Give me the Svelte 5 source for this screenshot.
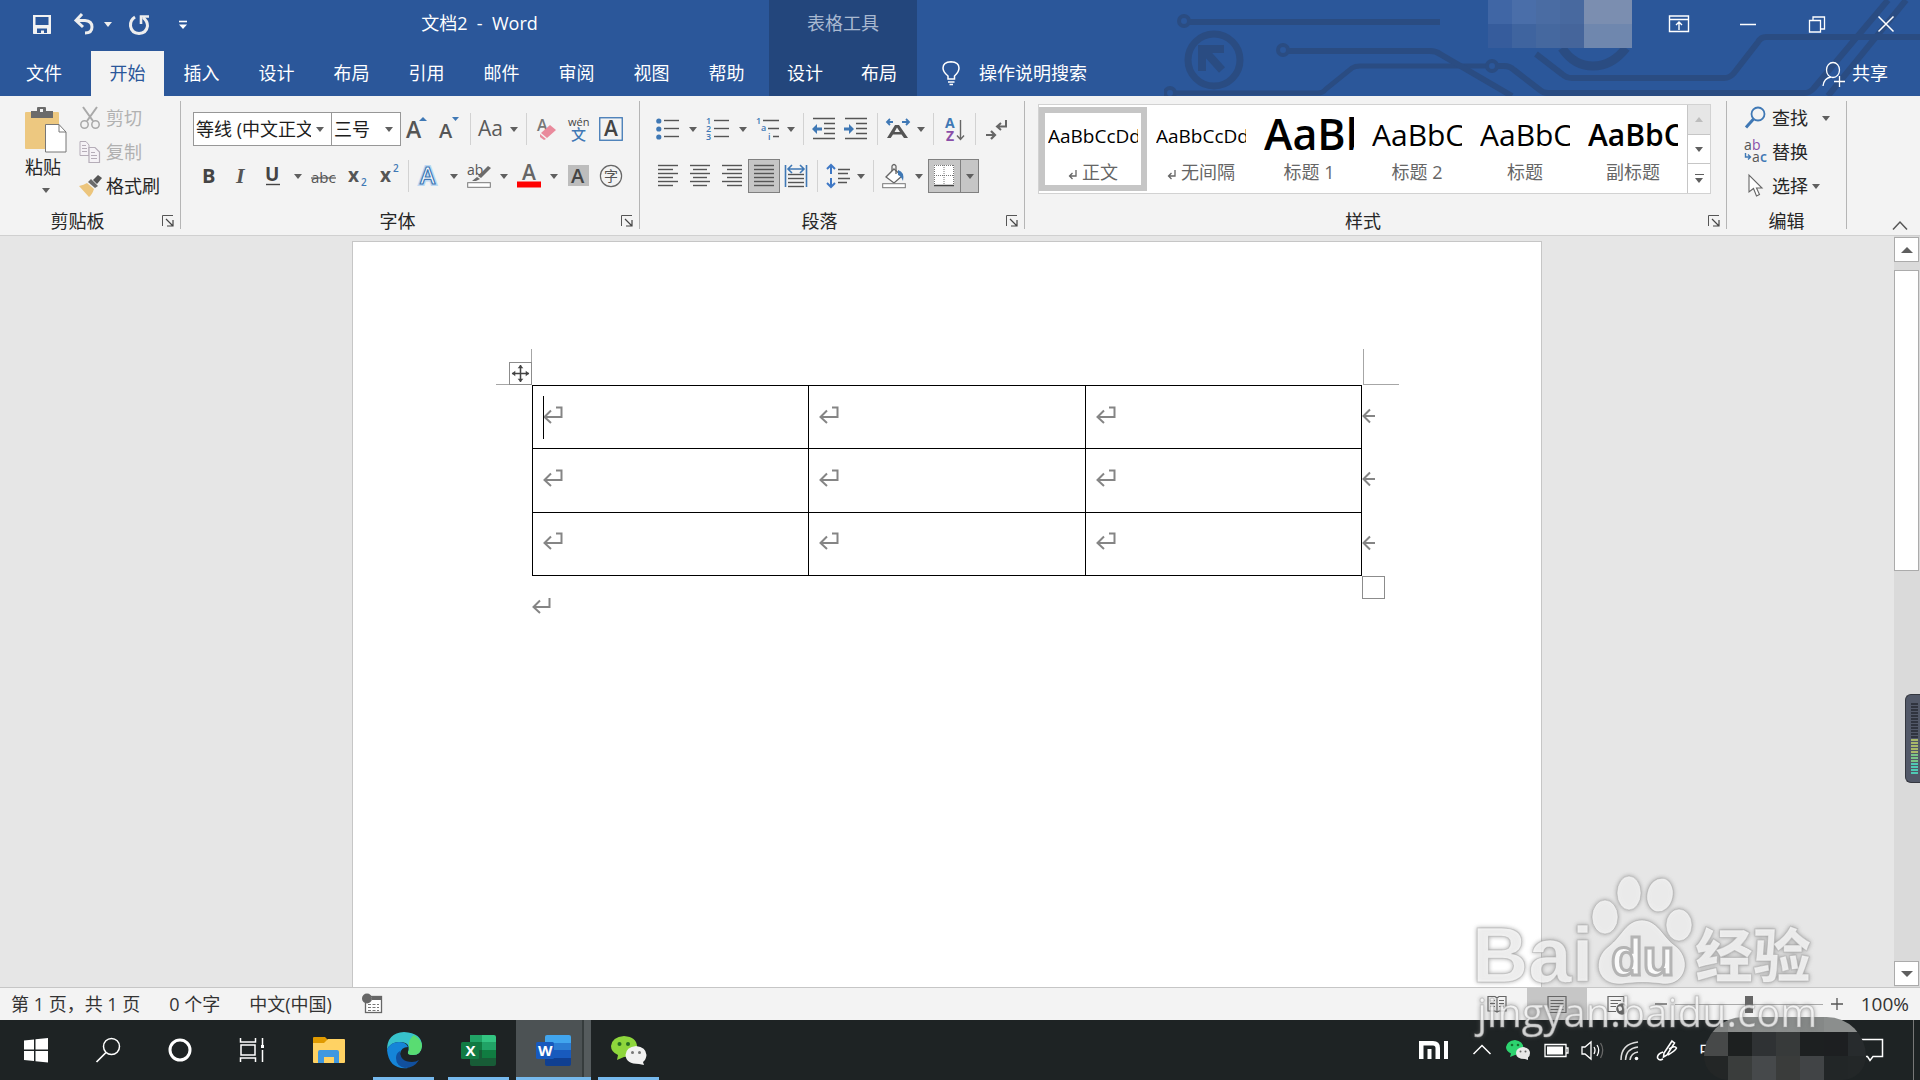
<script lang="ts">
  type Tool = { id: string; label: string; arrow?: boolean; tight?: boolean; pressed?: boolean; sep?: boolean };

  const tabs = ['文件', '开始', '插入', '设计', '布局', '引用', '邮件', '审阅', '视图', '帮助'];
  let activeTab = $state('开始');
  let zoom = $state(50);

  const fontTop: Tool[] = [
    { id: 'grow', label: '增大字号' },
    { id: 'shrink', label: '减小字号' },
    { id: 'case', label: '更改大小写', arrow: true, tight: true, sep: true },
    { id: 'clear', label: '清除所有格式', sep: true },
    { id: 'pinyin', label: '拼音指南' },
    { id: 'charBorder', label: '字符边框' },
  ];
  const fontBottom: Tool[] = [
    { id: 'bold', label: '加粗' },
    { id: 'italic', label: '倾斜' },
    { id: 'underline', label: '下划线', arrow: true },
    { id: 'strike', label: '删除线' },
    { id: 'sub', label: '下标' },
    { id: 'sup', label: '上标' },
    { id: 'effects', label: '文本效果', arrow: true, sep: true },
    { id: 'highlight', label: '突出显示', arrow: true },
    { id: 'fontColor', label: '字体颜色', arrow: true },
    { id: 'shade', label: '字符底纹' },
    { id: 'enclose', label: '带圈字符' },
  ];
  const paraTop: Tool[] = [
    { id: 'bullets', label: '项目符号', arrow: true },
    { id: 'numbers', label: '编号', arrow: true },
    { id: 'levels', label: '多级列表', arrow: true, tight: true },
    { id: 'outdent', label: '减少缩进量', sep: true },
    { id: 'indent', label: '增加缩进量' },
    { id: 'asian', label: '中文版式', arrow: true, tight: true, sep: true },
    { id: 'sort', label: '排序', sep: true },
    { id: 'marks', label: '显示编辑标记', sep: true },
  ];
  const paraBottom: Tool[] = [
    { id: 'left', label: '左对齐' },
    { id: 'center', label: '居中' },
    { id: 'right', label: '右对齐' },
    { id: 'justify', label: '两端对齐', pressed: true },
    { id: 'distribute', label: '分散对齐' },
    { id: 'spacing', label: '行和段落间距', arrow: true, tight: true, sep: true },
    { id: 'bucket', label: '底纹', arrow: true, sep: true },
    { id: 'borders', label: '边框', arrow: true, pressed: true },
  ];

  const styles = [
    { name: '正文', sample: 'AaBbCcDd', kind: 'body', mark: true, active: true },
    { name: '无间隔', sample: 'AaBbCcDd', kind: 'body', mark: true },
    { name: '标题 1', sample: 'AaBb', kind: 'h1' },
    { name: '标题 2', sample: 'AaBbC', kind: 'h2' },
    { name: '标题', sample: 'AaBbC', kind: 'h2' },
    { name: '副标题', sample: 'AaBbC', kind: 'sub' },
  ];

  const pins = [
    { id: 'start', label: '开始' },
    { id: 'find', label: '搜索' },
    { id: 'cortana', label: 'Cortana' },
    { id: 'taskview', label: '任务视图' },
    { id: 'explorer', label: '文件资源管理器', wide: true },
    { id: 'edge', label: 'Microsoft Edge', wide: true, open: true },
    { id: 'excel', label: 'Excel', wide: true, open: true },
    { id: 'word', label: 'Word', wide: true, open: true, current: true },
    { id: 'wechat', label: '微信', wide: true, open: true },
  ];

  const accountTiles = [
    '#4066a5', '#4a6ea9', '#4a6ca3', '#48699f', '#7b8eb0', '#7b8eb0',
    '#365c9c', '#3f649f', '#45689f', '#45659b', '#6f87ae', '#6f87ae',
  ];
  const clockTiles = [
    '#808382', '#8a8c8b', '#8a8d8c', '#8b8e8d', '#858887', '#8b8e8d', '#8b8e8d',
    '#474949', '#1d2020', '#2f3234', '#373a3a', '#1d2021', '#1d1f21', '#272b2d',
    '#232626', '#3a3d3c', '#46494b', '#3a3c3b', '#414446', '#222627', '#232728',
  ];

  const meter = Array.from({ length: 24 }, (_, i) => (i < 12 ? '#30343f' : i < 17 ? '#a9b869' : i < 20 ? '#79c487' : '#4fc9b4'));

  const lines = (rows: [number, number][], step = 5, top = 2) =>
    rows.map(([a, b], i) => `<path d="M${a} ${top + i * step + 0.5}H${b}"/>`).join('');
  const rule = (inner: string) => `<g stroke="#555" stroke-width="1.4" fill="none">${inner}</g>`;
  const T = (x: number, y: number, size: number, text: string, fill = '#555', extra = '') =>
    `<text x="${x}" y="${y}" font-size="${size}" fill="${fill}" ${extra}>${text}</text>`;
  const B = '#3f78b5';

  // every tool icon is drawn on a 24x24 grid
  const icons: Record<string, string> = {
    grow: T(1, 21, 23, 'A', '#555', 'font-weight="600"') + `<path d="M14 4L18 0L22 4Z" fill="${B}"/>`,
    shrink: T(2, 21, 20, 'A', '#555', 'font-weight="600"') + `<path d="M15 0H22L18.500 4Z" fill="${B}"/>`,
    case: T(-1, 19, 21, 'Aa', '#5a5a5a', 'font-weight="500"'),
    clear: T(2, 14, 16, 'A', '#777', 'font-weight="600"') + '<path d="M15 8L21 13L12 21L6 16Z" fill="#e98a9c"/><path d="M5 17L11 22L9 23L5 20Z" fill="#e98a9c"/>',
    pinyin: T(1, 9, 11, 'wén', '#444', 'font-weight="500"') + T(4, 23, 15, '文', B, 'font-weight="500"'),
    charBorder: `<rect x=".75" y=".75" width="22.500" height="22.500" fill="#f3f3f3" stroke="${B}" stroke-width="1.300"/>` + T(5, 19, 21, 'A', '#444', 'font-weight="600"'),
    bold: T(5, 19, 20, 'B', '#444', 'font-weight="700"'),
    italic: '<text x="7" y="19" font-size="22" fill="#555" font-family="Liberation Serif" font-style="italic" font-weight="700">I</text>',
    underline: T(4, 17, 19, 'U', '#444', 'font-weight="700"') + '<path d="M5 20.500H19" stroke="#444" stroke-width="1.400"/>',
    strike: T(0, 19, 15, 'abc', '#555') + '<path d="M0 14H25" stroke="#555" stroke-width="1.200"/>',
    sub: T(5, 18, 19, 'x', '#555', 'font-weight="700"') + T(18, 22, 10, '2', B, 'font-weight="600"'),
    sup: T(5, 18, 19, 'x', '#555', 'font-weight="700"') + T(18, 8, 10, '2', B, 'font-weight="600"'),
    effects: `<text x="3" y="20" font-size="23" font-weight="600" fill="#fff" stroke="#bcd8f2" stroke-width="4">A</text><text x="3" y="20" font-size="23" font-weight="600" fill="#fff" stroke="${B}" stroke-width="1.200">A</text>`,
    highlight: T(0, 11, 14, 'ab', '#555', 'font-weight="500"') + '<path d="M21 2L24 4L14 14L11 12Z" fill="#6b6b6b"/><path d="M10 13L13 15L9 17L5 17Z" fill="#6b6b6b"/><rect x=".7" y="18.700" width="22.600" height="4.600" fill="#fff" stroke="#777"/>',
    fontColor: T(5, 16, 21, 'A', '#666', 'font-weight="600"') + '<rect y="17.500" width="24" height="6" fill="#f00"/>',
    shade: '<rect x="1" y="1" width="21" height="21" fill="#bdbdbd"/>' + T(4, 19, 20, 'A', '#444', 'font-weight="600"'),
    enclose: '<circle cx="12" cy="12" r="10.600" fill="none" stroke="#666" stroke-width="1.200"/>' + T(5, 17, 14, '字', '#555'),
    bullets: [4, 12, 20].map((y) => `<circle cx="2.800" cy="${y}" r="2.600" fill="${B}"/>`).join('') + rule(lines([[8, 23], [8, 23], [8, 23]], 8, 3)),
    numbers: T(0, 7, 9, '1', B, 'font-weight="600"') + T(0, 15, 9, '2', B, 'font-weight="600"') + T(0, 23, 9, '3', B, 'font-weight="600"') + rule(lines([[8, 23], [8, 23], [8, 23]], 8, 3)),
    levels: T(0, 7, 9, '1', B, 'font-weight="600"') + T(5, 14, 9, 'a', B, 'font-weight="600"') + T(12, 23, 9, 'i', B, 'font-weight="600"') + rule('<path d="M7 3.500H23M12 11.500H23M17 19.500H23"/>'),
    outdent: rule('<path d="M1 1.500H23M12 6.500H23M12 11.500H23M12 16.500H23M1 21.500H23"/>') + `<path d="M0 12L5 7V10.500H10V13.500H5V17Z" fill="${B}"/>`,
    indent: rule('<path d="M1 1.500H23M12 6.500H23M12 11.500H23M12 16.500H23M1 21.500H23"/>') + `<path d="M10 12L5 7V10.500H0V13.500H5V17Z" fill="${B}"/>`,
    asian: '<path d="M1 21L9 8H13L22 21H18L15.500 17.500H7L4.700 21ZM8.500 15H14L11 10.500Z" fill="#555"/>' + `<path d="M1 5H7M4 2L1 5L4 8M16 5H23M20 2L23 5L20 8" stroke="${B}" stroke-width="1.800" fill="none"/>`,
    sort: T(3, 11, 14, 'A', B, 'font-weight="700"') + T(4, 24, 14, 'Z', '#8a4fa8', 'font-weight="700"') + '<path d="M18.500 3V22M15 18.500L18.500 22.500L22 18.500" stroke="#666" stroke-width="1.400" fill="none"/>',
    marks: '<path d="M22 3V9.500H13M17 6L13 9.500L17 13" stroke="#666" stroke-width="2" fill="none"/><path d="M2 18H10M7 14L11 18L7 22" stroke="#666" stroke-width="2.200" fill="none"/>',
    left: rule(lines([[2, 22], [2, 17], [2, 22], [2, 17], [2, 22], [2, 17]], 4, 1)),
    center: rule(lines([[2, 22], [5, 19], [2, 22], [5, 19], [2, 22], [5, 19]], 4, 1)),
    right: rule(lines([[2, 22], [7, 22], [2, 22], [7, 22], [2, 22], [7, 22]], 4, 1)),
    justify: rule(lines([[2, 22], [2, 22], [2, 22], [2, 22], [2, 22], [2, 22]], 4, 1)),
    distribute: rule(lines([[4, 20], [4, 20], [4, 20], [4, 20]], 4, 10)) + `<path d="M1.500 1V23M22.500 1V23M4 5H20M8 1L4 5L8 9M16 1L20 5L16 9" stroke="${B}" stroke-width="1.600" fill="none"/>`,
    spacing: rule('<path d="M12 5.500H24M12 9.500H22M12 14.500H24M12 18.500H21"/>') + '<path d="M5 1V10M1 5L5 1L9 5M5 14V23M1 19L5 23L9 19" stroke="#3f78c5" stroke-width="2" fill="none"/>',
    bucket: '<path d="M12 5L20 12L12 19L4 13Z" fill="#fff" stroke="#666" stroke-width="1.300"/><path d="M10 7V2Q12 -1 14 2V10" stroke="#666" stroke-width="1.300" fill="none"/><path d="M16 6Q23 8 21 17Q19 12 16 11Z" fill="#3f78b5"/><rect x=".7" y="19.700" width="22.600" height="4" fill="#fff" stroke="#777"/>',
    borders: '<rect x="2" y="1" width="20" height="20" fill="#fff"/><path d="M2.500 1V21M12 1V21M21.500 1V21M2 1.500H22M2 11.500H22" stroke="#777" stroke-dasharray="1 1" fill="none"/><path d="M2 21.500H22" stroke="#444" stroke-width="1.500"/>',

    save: '<path d="M3 3H21V21.500H3ZM5.500 5V13H18.500V5Z" fill="#f2f2f2" fill-rule="evenodd"/><path d="M7 16.500H17V21H14V18.500H11V21H7Z" fill="#2b579a"/><path d="M3.500 3.500H20.500V21.500H3.500Z" fill="none" stroke="#f2f2f2"/>',
    undo: '<path d="M4 8.500H13Q20 9 20 15Q20 21 13 21" fill="none" stroke="#eee" stroke-width="3"/><path d="M10 2L4 8.500L11 15" fill="none" stroke="#eee" stroke-width="3"/>',
    redo: '<path d="M8 5Q3 8 3.500 14Q4.500 21 12 21.500Q19.500 21 20.500 14Q20.500 9 16 5.500" fill="none" stroke="#eee" stroke-width="3"/><path d="M14 12V4.500H22" fill="none" stroke="#eee" stroke-width="2.600"/>',
    customize: '<path d="M8 9.500H16" stroke="#fff" stroke-width="1.600"/><path d="M8 12.500H16L12 17Z" fill="#fff"/>',
    bulb: '<path d="M9 18V15Q4 11 4 7Q4 1 12 .7Q20 1 20 7Q20 11 15.500 15V18ZM9 21H15.500M10.500 23.500H14" fill="none" stroke="#fff" stroke-width="1.500"/>',
    person: '<ellipse cx="12" cy="9" rx="6.500" ry="7.500" fill="none" stroke="#fff" stroke-width="1.300"/><path d="M2 25Q3 17 10 16M13 20.500H24M18.500 15V26" fill="none" stroke="#fff" stroke-width="1.300"/>',
    cut: '<path d="M5 1L15 15M19 1L9 15" stroke="#a9a9a9" stroke-width="2"/><circle cx="6.500" cy="18.500" r="3.700" fill="none" stroke="#a9a9a9" stroke-width="1.500"/><circle cx="17.500" cy="18.500" r="3.700" fill="none" stroke="#a9a9a9" stroke-width="1.500"/>',
    copy: '<path d="M2 1.500H8L11 5V15.500H2Z" fill="#f5f2f6" stroke="#b5adb8"/><path d="M4 5.500H8M4 8.500H9M4 11.500H9" stroke="#b5adb8"/><path d="M11 7.500H17L21.500 12V22.500H11Z" fill="#f5f2f6" stroke="#b5adb8" stroke-width="1.200"/><path d="M13 12.500H17M13 15.500H19M13 18.500H19" stroke="#b5adb8"/>',
    painter: '<path d="M20 1L24 4L19 10L15 6Z" fill="#555"/><path d="M13 5L20 12L17 14L10 8Z" fill="#6b6b6b"/><path d="M9 9L16 15Q14 21 11 23L1 12Q6 11 9 9Z" fill="#ecc57c"/>',
    magnifier: `<circle cx="14" cy="8" r="6.500" fill="none" stroke="${B}" stroke-width="1.800"/><path d="M9.500 13L2 21.500" stroke="${B}" stroke-width="3"/>`,
    replace: T(0, 10, 14, 'a', '#555', 'font-weight="500"') + T(8, 10, 14, 'b', '#8a4fa8', 'font-weight="500"') + T(8, 22, 14, 'a', '#555', 'font-weight="500"') + T(16, 22, 14, 'c', B, 'font-weight="600"') + `<path d="M1.500 13V17H6M4 14.500L6.500 17L4 19.500" stroke="${B}" stroke-width="1.400" fill="none"/>`,
    pointer: '<path d="M5 1V18L9.500 14.500L12.500 22L15.500 20.500L12.500 14H18Z" fill="#fff" stroke="#666" stroke-width="1.100"/>',
    ribbonView: '<path d="M2.500 4H21.500V19.500H2.500ZM2.500 7.500H21.500M12 18V10M9 13L12 10L15 13" fill="none" stroke="#fff" stroke-width="1.400"/>',
    minimize: '<path d="M4 12.500H20" stroke="#fff" stroke-width="1.500"/>',
    restore: '<path d="M4.500 8.500H15.500V20H4.500ZM8 8V5H19.500V17H16" fill="none" stroke="#fff" stroke-width="1.300"/>',
    close: '<path d="M4.500 4.500L19.500 19.500M19.500 4.500L4.500 19.500" stroke="#fff" stroke-width="1.500"/>',
    macro: '<rect x="4.500" y="4.500" width="16" height="16" fill="#fff" stroke="#666" stroke-width="1.300"/><rect x="11" y="4" width="10" height="4" fill="#666"/><circle cx="6" cy="6.500" r="5" fill="#666"/><path d="M7 12.500H18M7 15.500H18M7 18.500H18" stroke="#777" stroke-dasharray="3 1.500"/>',
    reading: '<path d="M3 4.500H10L12 6L14 4.500H21V19H14L12 20L10 19H3ZM12 6V20M5 8.500H10M5 11.500H10M5 14.500H10M14 8.500H19M14 11.500H19M14 14.500H19" fill="none" stroke="#666" stroke-width="1.200"/>',
    printView: '<path d="M3 4.500H21V20.500H3ZM5.500 8.500H18.500M5.500 11.500H18.500M5.500 14.500H18.500M5.500 17.500H18.500" fill="none" stroke="#666" stroke-width="1.200"/>',
    webView: '<path d="M19 10V4.500H3V19.500H11M5.500 8.500H16M5.500 11.500H13M5.500 14.500H11" fill="none" stroke="#666" stroke-width="1.200"/><circle cx="17" cy="17" r="5.800" fill="#666"/><path d="M13 15Q16 13 17 16T14 19M18 12Q20 14 21 15L19 17Z" fill="#eee"/>',
  };

  // taskbar artwork uses a 36x36 grid
  const art: Record<string, string> = {
    start: '<path d="M6 8.500L16 7.500V17.500H6ZM17.500 7.300L30 6V17.500H17.500ZM6 19H16V29L6 28ZM17.500 19H30V30.500L17.500 29.200Z" fill="#fff"/>',
    find: '<circle cx="21.500" cy="14.500" r="8" fill="none" stroke="#fff" stroke-width="1.500"/><path d="M16 20.500L6.500 30" stroke="#fff" stroke-width="1.700"/>',
    cortana: '<circle cx="18" cy="18" r="10" fill="none" stroke="#fff" stroke-width="3"/>',
    taskview: '<path d="M6.500 6V10H21.500V6M6.500 30V26H21.500V30M7 13H21V23H7ZM28.500 6V13M28.500 18V30" fill="none" stroke="#fff" stroke-width="1.500"/><rect x="27" y="13" width="3" height="3" fill="#fff"/>',
    explorer: '<path d="M2 6Q2 5 3 5H14L17 8V14H2Z" fill="#e09a00"/><path d="M2 11H13L17 7H33Q34 7 34 8V30Q34 31 33 31H3Q2 31 2 30Z" fill="#ffd263"/><path d="M7 31V20Q7 18 9 18H26Q28 18 28 20V31H23V25H13V31Z" fill="#3f98e0"/>',
    edge: '<path d="M1 18Q1 1 18 0Q36 1 36 14Q35 23 27 23Q21 23 22 20Q25 10 14 10Q4 10 1 18Z" fill="#37c2cb"/><path d="M28 3Q36 8 36 14Q35 23 27 23Q21 23 22 20Q24 18 23 15Q22 7 28 3Z" fill="#59dc72"/><path d="M1 18Q4 10 13 10Q20 10 22 15Q15 15 14 22Q14 30 22 36Q3 38 1 18Z" fill="#1585d8"/><path d="M14 19Q14 30 26 30Q30 30 33 28Q28 36 19 36Q10 34 10 26Q10 21 14 19Z" fill="#11509e"/>',
    excel: '<path d="M9 3H21V10H9Z" fill="#21a366"/><path d="M21 3H33Q35 3 35 5V10H21Z" fill="#33c481"/><path d="M9 10H21V18H9Z" fill="#107c41"/><path d="M21 10H35V18H21Z" fill="#21a366"/><path d="M9 18H21V26H9Z" fill="#185c37"/><path d="M21 18H35V26H21Z" fill="#107c41"/><path d="M9 26H35V32Q35 34 33 34H11Q9 34 9 32Z" fill="#185c37"/><rect x="0" y="10" width="18" height="17" rx="1.500" fill="#117a43"/><text x="4.500" y="24" font-size="15" font-weight="700" fill="#fff">X</text>',
    word: '<path d="M9 5Q9 3 11 3H33Q35 3 35 5V11H9Z" fill="#41a5ee"/><path d="M9 11H35V18H9Z" fill="#2b7cd3"/><path d="M9 18H35V26H9Z" fill="#185abd"/><path d="M9 26H35V32Q35 34 33 34H11Q9 34 9 32Z" fill="#103f91"/><rect x="0" y="10" width="18" height="17" rx="1.500" fill="#185abd"/><text x="2" y="24" font-size="15" font-weight="700" fill="#fff">W</text>',
    wechat: '<path d="M13 4Q26 5 26 15Q25 25 13 25L6 28L7 23Q0 20 0 14Q1 5 13 4Z" fill="#8ed63c"/><circle cx="8.500" cy="12" r="2" fill="#266e22"/><circle cx="17" cy="12" r="2" fill="#266e22"/><path d="M25 14Q35 15 35.500 23Q35 28 32 30L33 33L28 32Q15 32 14.500 23Q15 15 25 14Z" fill="#f1f1f1"/><circle cx="21.500" cy="20.500" r="1.500" fill="#777"/><circle cx="28.500" cy="20.500" r="1.500" fill="#777"/>',
  };

  // tray symbols, 28x28 grid
  const tray = [
    { label: '显示隐藏的图标', body: '<path d="M5.500 18L14 9.500L22.500 18" fill="none" stroke="#fff" stroke-width="1.500"/>' },
    { label: '微信', body: '<path d="M10 4Q18 5 18.500 12Q18 19 10 19L5 21L6 17.500Q1 15 1 11Q2 5 10 4Z" fill="#2dd36f"/><circle cx="7" cy="9" r="1.300" fill="#14702f"/><circle cx="13" cy="9" r="1.300" fill="#14702f"/><path d="M18 11Q25 12 25 17Q25 20 23 21.500V24L20 23Q11 23 11 17Q11 12 18 11Z" fill="#e8e8e8"/><circle cx="15.500" cy="15.500" r="1" fill="#666"/><circle cx="20.500" cy="15.500" r="1" fill="#666"/>' },
    { label: '电池', body: '<path d="M3 8.500H24V20.500H3ZM24.500 12H26V17H24.500" fill="none" stroke="#fff" stroke-width="1.300"/><rect x="5" y="10.500" width="16" height="8" fill="#fff"/>' },
    { label: '音量', body: '<path d="M3 11H6L12 6V23L6 18H3Z" fill="none" stroke="#fff" stroke-width="1.300"/><path d="M15 11Q17 14 15 18M18 9Q21.500 14 18 20" fill="none" stroke="#fff" stroke-width="1.300"/><path d="M21.500 7Q26 14 21.500 22" fill="none" stroke="#666" stroke-width="1.300"/>' },
    { label: '网络', body: '<path d="M5 24Q5 8 22 6M9.500 24Q10 12.500 22 11M14 24Q15 17 22 16" fill="none" stroke="#ddd" stroke-width="1.500"/><circle cx="20.500" cy="22.500" r="1.800" fill="#fff"/>' },
    { label: '手写笔', body: '<path d="M19 5L21.500 7L14 19L10.500 21L11 17ZM10 16Q4 18 4.500 22Q6 25 10 23M15 19Q22 15 23.500 12Q22 9 16 13" fill="none" stroke="#fff" stroke-width="1.600"/>' },
  ];
</script>

{#snippet icon(name: string)}
  <svg class="icon" viewBox="0 0 24 24" aria-hidden="true">{@html icons[name]}</svg>
{/snippet}

{#snippet tools(list: Tool[])}
  {#each list as t}
    {#if t.sep}<span class="sep"></span>{/if}
    <button class="tool" class:tight={t.tight} class:pressed={t.pressed} aria-label={t.label}>
      <span class="face">{@render icon(t.id)}</span>
      {#if t.arrow}<span class="drop"><i class="tri"></i></span>{/if}
    </button>
  {/each}
{/snippet}

{#snippet groupLabel(text: string, launcher: boolean)}
  <div class="group-label">
    <span>{text}</span>
    {#if launcher}
      <button class="launcher" aria-label="{text}设置">
        <svg viewBox="0 0 12 12"><path d="M.5 11V.5H11" fill="none" stroke="#555" /><path d="M4 4L10.500 10.500M11 5V11H5" fill="none" stroke="#444" stroke-width="1.200" /></svg>
      </button>
    {/if}
  </div>
{/snippet}

{#snippet enter()}
  <svg class="enter" viewBox="0 0 20 18"><path d="M13 1.500H18.500V11H2M8 4.500L1.500 11L8 17" /></svg>
{/snippet}

<div class="app">
  <header>
    <svg class="circuit" viewBox="0 0 756 96" aria-hidden="true">
      <g fill="none" stroke="#2a4c82" stroke-width="6">
        <circle cx="20" cy="21" r="5" stroke-width="4" /><path d="M26 22H276" />
        <circle cx="50" cy="60" r="26" stroke-width="7" />
        <path d="M38 71V49H60M40 50L58 70" stroke-width="8" />
        <circle cx="6" cy="93" r="5" stroke-width="4" /><path d="M12 93H154Q159 93 162 89L188 68Q191 66 196 66H322" stroke-width="5" />
        <circle cx="328" cy="66" r="5" stroke-width="4" /><path d="M334 66H340Q346 66 350 70L376 90Q379 93 384 93H640Q646 93 650 88L724 0M664 96L742 0" />
        <circle cx="119" cy="50" r="5" stroke-width="4" /><path d="M125 51H266Q272 51 276 54L348 96" />
        <path d="M372 54L398 74Q402 78 408 78H560Q566 78 570 73L594 42Q597 37 602 37H756" />
        <path d="M398 48Q410 66 429 66T462 48" stroke-width="9" />
      </g>
    </svg>

    <div class="head-left">
      <div class="title-row">
        <div class="quick">
          <button aria-label="保存">{@render icon('save')}</button>
          <button class="undo" aria-label="撤消">{@render icon('undo')}<i class="tri light"></i></button>
          <button aria-label="恢复">{@render icon('redo')}</button>
          <button class="customize" aria-label="自定义快速访问工具栏">{@render icon('customize')}</button>
        </div>
        <h1>文档2&nbsp; -&nbsp; Word</h1>
      </div>
      <nav>
        {#each tabs as tab, i}
          <button class="tab" class:file={i === 0} class:active={tab === activeTab} onclick={() => (activeTab = tab)}>{tab}</button>
        {/each}
      </nav>
    </div>

    <div class="context">
      <div class="context-title">表格工具</div>
      <nav>
        <button class="tab">设计</button>
        <button class="tab">布局</button>
      </nav>
    </div>

    <div class="head-right">
      <div class="title-row end">
        <div class="account">
          {#each accountTiles as c}<i style="background:{c}"></i>{/each}
        </div>
        <button class="win" aria-label="功能区显示选项">{@render icon('ribbonView')}</button>
        <button class="win" aria-label="最小化">{@render icon('minimize')}</button>
        <button class="win" aria-label="向下还原">{@render icon('restore')}</button>
        <button class="win" aria-label="关闭">{@render icon('close')}</button>
      </div>
      <div class="tell-row">
        <button class="tell">{@render icon('bulb')}<span>操作说明搜索</span></button>
        <button class="share">{@render icon('person')}<span>共享</span></button>
      </div>
    </div>
  </header>

  <section class="ribbon">
    <div class="group clipboard">
      <div class="group-body">
        <button class="paste">
          <svg viewBox="0 0 42 46" aria-hidden="true">
            <rect x="0" y="5" width="34" height="37" rx="1" fill="#edc880" />
            <path d="M6 4H12V1Q12 0 13 0H20Q21 0 21 1V4H28V11H6Z" fill="#6b6b6b" /><rect x="15" y="2" width="3" height="3" fill="#f3f3f3" />
            <path d="M20.500 17.500H34L41 25V45H20.500Z" fill="#fff" stroke="#777" /><path d="M34 17.500V25H41" fill="none" stroke="#777" />
          </svg>
          <span>粘贴</span>
          <i class="tri"></i>
        </button>
        <div class="stack">
          <button class="row-btn" disabled>{@render icon('cut')}剪切</button>
          <button class="row-btn" disabled>{@render icon('copy')}复制</button>
          <button class="row-btn">{@render icon('painter')}格式刷</button>
        </div>
      </div>
      {@render groupLabel('剪贴板', true)}
    </div>

    <div class="group">
      <div class="group-body rows">
        <div class="tool-row">
          <div class="combo name">
            <select aria-label="字体"><option>等线 (中文正文)</option></select><i class="tri"></i>
          </div>
          <div class="combo size">
            <select aria-label="字号"><option>三号</option></select><i class="tri"></i>
          </div>
          {@render tools(fontTop)}
        </div>
        <div class="tool-row">{@render tools(fontBottom)}</div>
      </div>
      {@render groupLabel('字体', true)}
    </div>

    <div class="group">
      <div class="group-body rows">
        <div class="tool-row">{@render tools(paraTop)}</div>
        <div class="tool-row">{@render tools(paraBottom)}</div>
      </div>
      {@render groupLabel('段落', true)}
    </div>

    <div class="group style-group">
      <div class="group-body">
        <div class="gallery">
          <div class="cards">
            {#each styles as s}
              <button class="card" class:selected={s.active}>
                <span class="sample {s.kind}">{s.sample}</span>
                <span class="card-name">
                  {#if s.mark}<svg viewBox="0 0 9 10"><path d="M8 0V6H2M4.500 3L1.500 6L4.500 9" fill="none" stroke="#666" stroke-width="1.300" /></svg>{/if}{s.name}
                </span>
              </button>
            {/each}
          </div>
          <div class="gallery-nav">
            <button class="off" aria-label="上一行"><i class="tri up"></i></button>
            <button aria-label="下一行"><i class="tri"></i></button>
            <button class="more" aria-label="其他"><i class="tri"></i></button>
          </div>
        </div>
      </div>
      {@render groupLabel('样式', true)}
    </div>

    <div class="group edit">
      <div class="group-body">
        <div class="stack">
          <button class="row-btn find">{@render icon('magnifier')}查找<i class="tri"></i></button>
          <button class="row-btn">{@render icon('replace')}替换</button>
          <button class="row-btn">{@render icon('pointer')}选择<i class="tri"></i></button>
        </div>
      </div>
      {@render groupLabel('编辑', false)}
    </div>

    <button class="collapse" aria-label="折叠功能区">
      <svg viewBox="0 0 16 9"><path d="M1 8.500L8 1L15 8.500" fill="none" stroke="#555" stroke-width="1.500" /></svg>
    </button>
  </section>

  <main>
    <div class="desk">
      <article class="page">
        <div class="table-wrap">
          <span class="crop crop-left"></span>
          <span class="crop crop-right"></span>
          <button class="move" aria-label="移动表格">
            <svg viewBox="0 0 20 20"><path d="M10 1V19M1 10H19" stroke="#444" stroke-width="1.600" /><path d="M10 1L13 4.500H7ZM10 19L13 15.500H7ZM1 10L4.500 7V13ZM19 10L15.500 7V13Z" fill="#444" /></svg>
          </button>
          <table>
            <tbody>
              {#each [0, 1, 2] as r}
                <tr>
                  {#each [0, 1, 2] as c}
                    <td>
                      {#if r === 0 && c === 0}<span class="caret"></span>{/if}
                      {@render enter()}
                      {#if c === 2}<svg class="row-end" viewBox="0 0 13 14"><path d="M13 7H1.500M8 .5L1.500 7L8 13.500" /></svg>{/if}
                    </td>
                  {/each}
                </tr>
              {/each}
            </tbody>
          </table>
          <span class="resize"></span>
        </div>
        <p><svg class="enter" viewBox="0 0 20 18"><path d="M17.500 2V11H2M8 4.500L1.500 11L8 17" /></svg></p>
      </article>
    </div>
    <div class="scroll">
      <button aria-label="向上滚动"><i class="tri up big"></i></button>
      <div class="track"><div class="thumb"></div></div>
      <button aria-label="向下滚动"><i class="tri big"></i></button>
    </div>
    <div class="meter">
      {#each meter as c}<i style="background:{c}"></i>{/each}
    </div>
  </main>

  <footer class="status">
    <button>第 1 页，共 1 页</button>
    <button>0 个字</button>
    <button>中文(中国)</button>
    <button aria-label="宏录制">{@render icon('macro')}</button>
    <div class="views">
      <button aria-label="阅读视图">{@render icon('reading')}</button>
      <button class="on" aria-label="页面视图">{@render icon('printView')}</button>
      <button aria-label="Web 版式视图">{@render icon('webView')}</button>
    </div>
    <div class="zoom">
      <button class="step" aria-label="缩小"><svg viewBox="0 0 12 12"><path d="M0 6H12" stroke="#555" stroke-width="1.300" /></svg></button>
      <input type="range" min="0" max="100" bind:value={zoom} aria-label="缩放" />
      <button class="step" aria-label="放大"><svg viewBox="0 0 12 12"><path d="M0 6H12M6 0V12" stroke="#555" stroke-width="1.300" /></svg></button>
      <button class="percent">100%</button>
    </div>
  </footer>

  <div class="taskbar">
    {#each pins as p}
      <button class="pin" class:wide={p.wide} class:open={p.open} class:current={p.current} aria-label={p.label}>
        <svg viewBox="0 0 36 36" aria-hidden="true">{@html art[p.id]}</svg>
      </button>
    {/each}
    <div class="tray">
      <button class="mi" aria-label="小米">
        <svg viewBox="0 0 29 18"><path d="M0 0H14Q21 0 21 7V18H16.500V7Q16.500 4.500 14 4.500H4.500V18H0ZM8.500 8H12.500V18H8.500ZM25 0H29V18H25Z" fill="#fff" /></svg>
      </button>
      {#each tray as t}
        <button aria-label={t.label}><svg viewBox="0 0 28 28">{@html t.body}</svg></button>
      {/each}
      <span class="ime">中</span>
      <button class="notice" aria-label="通知">
        <svg viewBox="0 0 24 24"><path d="M1 1.500H22.500V18.500H13L10 22.500L7.500 18.500H1Z" fill="none" stroke="#fff" stroke-width="1.500" /></svg>
      </button>
      <button class="desktop" aria-label="显示桌面"></button>
    </div>
    <div class="clock-tiles">
      {#each clockTiles as c}<i style="background:{c}"></i>{/each}
    </div>
  </div>

  <svg class="watermark" viewBox="0 0 460 220" aria-hidden="true">
    <g class="brand">
      <text class="latin" x="12" y="122" font-size="78">Bai</text>
      <ellipse cx="145" cy="57" rx="13" ry="17" />
      <ellipse cx="169" cy="33" rx="12" ry="17" />
      <ellipse cx="200" cy="35" rx="13" ry="17" transform="rotate(12 200 35)" />
      <ellipse cx="219" cy="65" rx="13" ry="16" />
      <path d="M182 60C197 60 203 76 213 84C234 98 226 126 203 124C190 122 175 122 162 124C136 126 131 99 149 86C162 76 166 60 182 60Z" />
      <text class="latin du" x="151" y="115" font-size="52">du</text>
      <text class="hans" x="235" y="117" font-size="58">经验</text>
      <text class="url" x="17" y="167" font-size="40">jingyan.baidu.com</text>
    </g>
  </svg>
</div>

<style>
  :global(body) {
    margin: 0;
  }
  .app {
    position: relative;
    display: flex;
    flex-direction: column;
    height: 100vh;
    min-height: 640px;
    overflow: hidden;
    background: #e6e6e6;
    color: #262626;
    font-family: 'Open Sans', 'Noto Sans CJK SC', sans-serif;
    font-size: 18px;
    line-height: 24px;
  }
  button {
    display: flex;
    align-items: center;
    justify-content: center;
    flex: none;
    padding: 0;
    border: 0;
    background: none;
    color: inherit;
    font: inherit;
    white-space: nowrap;
  }
  svg {
    display: block;
    flex: none;
    overflow: visible;
  }
  .icon {
    width: 24px;
    height: 24px;
  }
  .tri {
    flex: none;
    width: 0;
    height: 0;
    border: 4px solid transparent;
    border-top: 5px solid #5f5f5f;
    border-bottom: 0;
  }
  .tri.up {
    border-top: 0;
    border-bottom: 5px solid #5f5f5f;
  }
  .tri.big {
    border-width: 6px;
    border-bottom-width: 0;
  }
  .tri.up.big {
    border-top-width: 0;
    border-bottom-width: 6px;
  }
  .tri.light {
    border-top-color: #eee;
  }

  /* title bar and tabs */
  header {
    position: relative;
    display: flex;
    flex: none;
    height: 96px;
    background: #2b579a;
    color: #fff;
  }
  .circuit {
    position: absolute;
    top: 0;
    right: 0;
    width: 756px;
    height: 96px;
    overflow: hidden;
  }
  .head-left {
    padding-right: 5px;
  }
  .title-row {
    display: flex;
    height: 51px;
  }
  .quick {
    display: flex;
    align-items: center;
    gap: 15px;
    height: 48px;
    padding-left: 30px;
  }
  .quick .undo {
    gap: 8px;
    margin-left: 3px;
  }
  .quick .customize {
    margin-left: 5px;
  }
  h1 {
    flex: 1;
    margin: 0;
    font-size: 18px;
    font-weight: 400;
    line-height: 46px;
    text-align: center;
  }
  nav {
    display: flex;
    height: 45px;
  }
  .tab {
    box-sizing: border-box;
    width: 75px;
    padding-bottom: 2px;
  }
  .tab.file {
    width: 91px;
    padding-right: 3px;
  }
  .tab.active {
    width: 73px;
    background: #f3f3f3;
    color: #2b579a;
  }
  .context {
    background: #23467c;
  }
  .context-title {
    height: 51px;
    color: #a9b9d1;
    line-height: 47px;
    text-align: center;
  }
  .context .tab {
    width: 74px;
    padding-right: 2px;
  }
  .head-right {
    position: relative;
    flex: 1;
  }
  .title-row.end {
    justify-content: flex-end;
  }
  .account {
    display: grid;
    grid-template-columns: repeat(6, 24px);
    grid-auto-rows: 24px;
    margin-right: 12px;
  }
  .win {
    width: 69px;
    height: 47px;
  }
  .tell-row {
    display: flex;
    justify-content: space-between;
    height: 43px;
    padding: 0 32px 2px 22px;
  }
  .tell {
    gap: 16px;
  }
  .share {
    gap: 7px;
  }

  /* ribbon */
  .ribbon {
    display: flex;
    flex: none;
    height: 139px;
    border-bottom: 1px solid #d0d0d0;
    background: #f3f3f3;
  }
  .group {
    display: flex;
    flex-direction: column;
    flex: none;
    justify-content: space-between;
    margin: 5px 0 6px;
    border-right: 1px solid #b5b5b5;
  }
  .group-body {
    display: flex;
    padding: 0 12px;
  }
  .group-body.rows {
    flex-direction: column;
    gap: 13px;
    padding-top: 11px;
  }
  .group-label {
    display: flex;
    align-items: center;
    height: 16px;
  }
  .group-label span {
    flex: 1;
    text-align: center;
  }
  .launcher {
    width: 25px;
  }
  .launcher svg {
    width: 12px;
    height: 12px;
  }
  .clipboard .group-body {
    gap: 11px;
    padding: 0 20px 0 25px;
  }
  .paste {
    flex-direction: column;
    justify-content: flex-start;
    padding-top: 6px;
  }
  .paste svg {
    width: 42px;
    height: 46px;
  }
  .paste span {
    margin: 2px 6px 9px 0;
  }
  .stack {
    display: flex;
    flex-direction: column;
    align-items: flex-start;
  }
  .row-btn {
    gap: 4px;
    height: 34px;
  }
  .row-btn:disabled {
    color: #b1b1b1;
  }
  .row-btn.find .tri {
    margin-left: 10px;
  }
  .tool-row {
    display: flex;
    height: 34px;
  }
  .tool {
    align-items: stretch;
  }
  .face,
  .drop {
    display: flex;
    align-items: center;
    justify-content: center;
  }
  .face {
    width: 32px;
  }
  .drop {
    width: 18px;
  }
  .tight .drop {
    width: 14px;
  }
  .tool.pressed {
    background: #c6c6c6;
    box-shadow: inset 0 0 0 1px #808080;
  }
  .tool.pressed .drop {
    border-left: 1px solid #808080;
  }
  .sep {
    width: 1px;
    margin: 1px 4px 1px 5px;
    background: #d2d2d2;
  }
  .combo {
    position: relative;
    width: 139px;
  }
  .combo.size {
    width: 70px;
    margin-left: -1px;
  }
  .combo select {
    width: 100%;
    height: 34px;
    padding: 0 20px 0 2px;
    border: 1px solid #979797;
    border-radius: 0;
    background: #fff;
    color: #1d1d1d;
    font: inherit;
    appearance: none;
  }
  .combo .tri {
    position: absolute;
    top: 15px;
    right: 8px;
    pointer-events: none;
  }
  .style-group {
    flex: 1 1 700px;
    min-width: 0;
  }
  .style-group .group-body {
    padding: 3px 15px 0 13px;
  }
  .gallery {
    display: flex;
    flex: 1;
    min-width: 0;
    height: 88px;
    border: 1px solid #d2d2d2;
    background: #fff;
  }
  .cards {
    display: flex;
    flex: 1;
    overflow: hidden;
    padding: 2px 0;
  }
  .card {
    flex-direction: column;
    width: 108px;
    box-sizing: border-box;
    border: 6px solid transparent;
    color: #666;
  }
  .card.selected {
    border-color: #c6c6c6;
  }
  .sample {
    width: 90px;
    height: 46px;
    overflow: hidden;
    color: #000;
    font-size: 19px;
    line-height: 44px;
    text-align: left;
  }
  .sample.h1 {
    font-size: 43px;
    font-weight: 600;
    line-height: 40px;
  }
  .sample.h2,
  .sample.sub {
    font-size: 30px;
    line-height: 42px;
  }
  .sample.sub {
    font-weight: 600;
  }
  .card-name {
    display: flex;
    align-items: center;
    gap: 5px;
  }
  .card-name svg {
    width: 9px;
    height: 10px;
    margin-top: 6px;
  }
  .gallery-nav {
    display: flex;
    flex-direction: column;
    width: 22px;
    border-left: 1px solid #c6c6c6;
  }
  .gallery-nav button {
    flex: 1;
  }
  .gallery-nav button + button {
    border-top: 1px solid #c6c6c6;
  }
  .gallery-nav .off {
    background: #e6e6e6;
  }
  .gallery-nav .off .tri {
    border-bottom-color: #bdbdbd;
  }
  .more {
    flex-direction: column;
    gap: 3px;
  }
  .more::before {
    width: 9px;
    height: 1px;
    background: #5f5f5f;
    content: '';
  }
  .edit .group-body {
    padding: 0 16px 0 17px;
  }
  .collapse {
    align-self: flex-end;
    width: 40px;
    height: 20px;
    margin-left: 33px;
  }
  .collapse svg {
    width: 16px;
    height: 9px;
  }

  /* document */
  main {
    position: relative;
    display: flex;
    flex: 1;
    min-height: 0;
  }
  .desk {
    display: flex;
    flex: 1;
    justify-content: center;
    overflow: hidden;
    padding-top: 5px;
  }
  .page {
    box-sizing: border-box;
    width: 1190px;
    padding: 143px 179px 0;
    border: 1px solid #c6c6c6;
    border-bottom: 0;
    background: #fff;
  }
  .table-wrap {
    position: relative;
  }
  table {
    width: 100%;
    height: 191px;
    border-collapse: collapse;
    table-layout: fixed;
  }
  td {
    position: relative;
    padding: 0 0 5px 10px;
    border: 1px solid #000;
    vertical-align: middle;
  }
  .enter {
    width: 20px;
    height: 18px;
  }
  .enter path,
  .row-end path {
    fill: none;
    stroke: #858585;
    stroke-width: 2;
  }
  .caret {
    position: absolute;
    top: 10px;
    left: 10px;
    width: 1px;
    height: 43px;
    background: #000;
  }
  .row-end {
    position: absolute;
    top: 23px;
    left: 100%;
    width: 13px;
    height: 14px;
    margin-left: 1px;
  }
  .crop {
    position: absolute;
    top: -36px;
    width: 35px;
    height: 35px;
    border: 0 solid #a6a6a6;
    border-bottom-width: 1px;
  }
  .crop-left {
    right: 100%;
    border-right-width: 1px;
  }
  .crop-right {
    left: 100%;
    border-left-width: 1px;
    margin-left: 1px;
  }
  .move {
    position: absolute;
    right: 100%;
    bottom: 100%;
    width: 23px;
    height: 23px;
    border: 1px solid #8c8c8c;
    background: #fff;
  }
  .move svg {
    width: 19px;
    height: 19px;
  }
  .resize {
    position: absolute;
    top: 100%;
    left: 100%;
    width: 21px;
    height: 21px;
    border: 1px solid #8c8c8c;
    background: #fff;
  }
  p {
    margin: 20px 0 0;
  }
  .scroll {
    display: flex;
    flex-direction: column;
    width: 26px;
    box-sizing: border-box;
    padding: 1px 1px 1px 0;
    background: #dadada;
  }
  .scroll button {
    width: 25px;
    height: 25px;
    border: 1px solid #ababab;
    background: #fff;
  }
  .track {
    flex: 1;
    padding: 8px 0;
  }
  .thumb {
    box-sizing: border-box;
    height: 44%;
    border: 1px solid #ababab;
    background: #fff;
  }
  .meter {
    position: absolute;
    top: 61%;
    right: 0;
    display: flex;
    flex-direction: column;
    gap: 1px;
    width: 7px;
    padding: 8px 2px 8px 5px;
    border: 1px solid #34373f;
    border-right: 0;
    border-radius: 6px 0 0 6px;
    background: #525868;
  }
  .meter i {
    height: 2px;
  }

  /* status bar */
  .status {
    display: flex;
    flex: none;
    gap: 29px;
    height: 32px;
    padding: 0 11px;
    border-top: 1px solid #c6c6c6;
    background: #f3f3f3;
    color: #333;
  }
  .views {
    display: flex;
    margin-left: auto;
  }
  .views button {
    width: 60px;
  }
  .views .on {
    background: #c6c6c6;
  }
  .zoom {
    display: flex;
    margin-left: -29px;
  }
  .step {
    width: 28px;
  }
  .step svg {
    width: 12px;
    height: 12px;
  }
  input[type='range'] {
    width: 148px;
    margin: 0;
    background: none;
    appearance: none;
  }
  input[type='range']::-webkit-slider-runnable-track {
    height: 17px;
    background: linear-gradient(#a9a9a9, #a9a9a9) center / 100% 1px no-repeat;
  }
  input[type='range']::-webkit-slider-thumb {
    width: 8px;
    height: 17px;
    background: #666;
    appearance: none;
  }
  .percent {
    margin-left: 10px;
    font-size: 19px;
  }

  /* taskbar */
  .taskbar {
    position: relative;
    display: flex;
    flex: none;
    height: 60px;
    background: #1e2324;
    color: #fff;
  }
  .pin {
    position: relative;
    width: 72px;
  }
  .pin svg {
    width: 36px;
    height: 36px;
  }
  .pin.wide {
    width: 75px;
  }
  .pin:not(.wide) + .wide {
    margin-left: 3px;
  }
  .pin.open::after {
    position: absolute;
    right: 7px;
    bottom: 0;
    left: 7px;
    height: 3px;
    background: #76b9ed;
    content: '';
  }
  .pin.current {
    background: linear-gradient(to right, #4c5254 66px, #363c3d 66px, #363c3d 68px, #555b5d 68px);
  }
  .pin.current::after {
    right: 0;
    left: 0;
  }
  .tray {
    display: flex;
    align-items: center;
    margin-left: auto;
  }
  .tray button {
    width: 28px;
    height: 60px;
    margin-right: 9px;
  }
  .tray button svg {
    width: 28px;
    height: 28px;
  }
  .tray .mi {
    width: 29px;
    margin-right: 20px;
  }
  .tray .mi svg {
    width: 29px;
    height: 18px;
  }
  .ime {
    width: 18px;
    margin: 0 143px 0 9px;
  }
  .tray .notice {
    width: 24px;
    margin-right: 29px;
  }
  .tray .notice svg {
    width: 24px;
    height: 24px;
  }
  .tray .desktop {
    width: 7px;
    margin: 0;
    border-left: 1px solid #777;
  }
  .clock-tiles {
    position: absolute;
    right: 54px;
    bottom: 0;
    display: grid;
    grid-template-rows: 15px 24px 24px;
    grid-template-columns: repeat(7, 24px);
    width: 162px;
    overflow: hidden;
    border-radius: 40px 40px 24px 24px;
  }

  .watermark {
    position: absolute;
    right: 0;
    bottom: 0;
    width: 460px;
    height: 220px;
    pointer-events: none;
  }
  .brand {
    fill: rgba(255, 255, 255, 0.78);
    stroke: rgba(160, 160, 160, 0.45);
    stroke-width: 1;
    filter: drop-shadow(0 0 2px rgba(100, 100, 100, 0.7));
  }
  .latin {
    font-family: 'Liberation Sans', sans-serif;
    font-weight: 700;
  }
  .du {
    stroke: #b4b4b4;
    stroke-width: 3;
  }
  .hans {
    font-family: 'Noto Sans CJK SC', sans-serif;
    font-weight: 900;
  }
  .url {
    font-weight: 500;
  }
</style>
